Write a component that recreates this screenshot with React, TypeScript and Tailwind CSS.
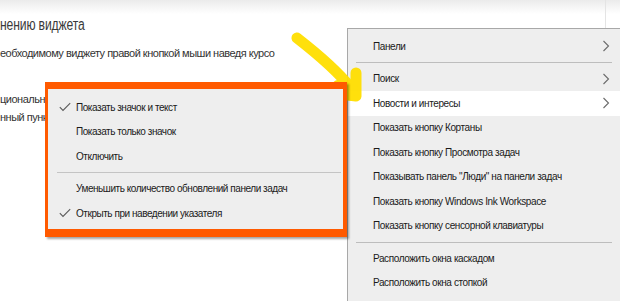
import React from "react";

const font = "font-['Liberation_Sans','Segoe_UI',Arial,sans-serif]";

function Chevron() {
  return (
    <svg width="8" height="12" viewBox="0 0 8 12" className="block">
      <polyline points="1.5,1 6.5,6 1.5,11" fill="none" stroke="#6b6b6b" strokeWidth="1.1" />
    </svg>
  );
}

function Check() {
  return (
    <svg width="12" height="10" viewBox="0 0 12 10" className="block">
      <polyline points="0.8,5.2 4,8.4 11.2,1.2" fill="none" stroke="#5a5a5a" strokeWidth="1.1" />
    </svg>
  );
}

type RItem = { label: string; chevron?: boolean; hot?: boolean } | "sep";

const rightItems: RItem[] = [
  { label: "Панели", chevron: true },
  "sep",
  { label: "Поиск", chevron: true },
  { label: "Новости и интересы", chevron: true, hot: true },
  { label: "Показать кнопку Кортаны" },
  { label: "Показать кнопку Просмотра задач" },
  { label: "Показывать панель \"Люди\" на панели задач" },
  { label: "Показать кнопку Windows Ink Workspace" },
  { label: "Показать кнопку сенсорной клавиатуры" },
  "sep",
  { label: "Расположить окна каскадом" },
  { label: "Расположить окна стопкой" },
];

type LItem = { label: string; checked?: boolean } | "sep";

const leftItems: LItem[] = [
  { label: "Показать значок и текст", checked: true },
  { label: "Показать только значок" },
  { label: "Отключить" },
  "sep",
  { label: "Уменьшить количество обновлений панели задач" },
  { label: "Открыть при наведении указателя", checked: true },
];

export default function App() {
  return (
    <div className={`relative w-[620px] h-[301px] overflow-hidden bg-white ${font}`}>
      {/* background page */}
      <div className="flex h-full bg-[linear-gradient(to_bottom,#ebebeb_0px,#ffffff_14px)]">
        <div className="w-[606px] h-[28px] border-r border-[#e4e4e4] shrink-0 absolute left-0 top-0" />
        <div className="flex flex-col pt-[13px] text-[#333]">
          <div className="text-[16px] leading-[24px] tracking-[-0.2px] text-[#3a3a3a] scale-x-[0.76] origin-left whitespace-nowrap">
            нению виджета
          </div>
          <div className="mt-[8px] text-[11px] leading-[16px] tracking-[-0.5px]">
            еобходимому виджету правой кнопкой мыши наведя курсо
          </div>
          <div className="mt-[29px] text-[11px] leading-[18px] tracking-[-0.5px]">циональные возможности</div>
          <div className="text-[11px] leading-[18px] tracking-[-0.5px]">нный пункт меню</div>
        </div>
      </div>

      {/* right context menu */}
      <div className="absolute left-[347px] top-[28px] w-[280px] h-[290px] bg-[#eeeeee] border border-[#a8a8a8] pt-[5px] text-[10px] text-[#1a1a1a]">
        {rightItems.map((it, i) =>
          it === "sep" ? (
            <div key={i} className="h-[8px] flex items-center pl-[8px] pr-[14px]">
              <div className="h-px w-full bg-[#bdbdbd]" />
            </div>
          ) : (
            <div
              key={i}
              className={`h-[24.5px] flex items-center pl-[25px] pr-[16px] ${it.hot ? "bg-white" : ""}`}
            >
              <span className="flex-1 whitespace-nowrap tracking-[-0.4px]">{it.label}</span>
              {it.chevron ? <Chevron /> : null}
            </div>
          )
        )}
      </div>

      {/* yellow arrow */}
      <svg className="absolute left-0 top-0" width="620" height="301" viewBox="0 0 620 301">
        <g fill="none" stroke="#ffdf00" strokeLinecap="round" strokeLinejoin="round" opacity="0.95">
          <path d="M297 38 C 315 52, 335 68, 351 88" strokeWidth="11" />
          <path d="M331 93 L 356 96 L 356 73" strokeWidth="11" />
          <path d="M338 86 L 352 90" strokeWidth="12" />
        </g>
      </svg>

      {/* orange-framed left menu */}
      <div className="absolute left-[45px] top-[82px] w-[302px] h-[155px] border-l-[3px] border-t-[7px] border-b-[8px] border-r-[4px] border-[#ff5a00] bg-[#eeeeee] shadow-[2px_2px_2px_rgba(0,0,0,0.35)] text-[10px] text-[#1a1a1a]">
        <div className="pt-[6px]">
          {leftItems.map((it, i) =>
            it === "sep" ? (
              <div key={i} className="h-[8px] flex items-center pl-[9px] pr-[2px]">
                <div className="h-px w-full bg-[#c4c4c4]" />
              </div>
            ) : (
              <div key={i} className="h-[24.5px] flex items-center">
                <div className="w-[28px] flex justify-end pr-[5px]">
                  {it.checked ? <Check /> : null}
                </div>
                <span className="whitespace-nowrap tracking-[-0.45px]">{it.label}</span>
              </div>
            )
          )}
        </div>
      </div>
    </div>
  );
}
